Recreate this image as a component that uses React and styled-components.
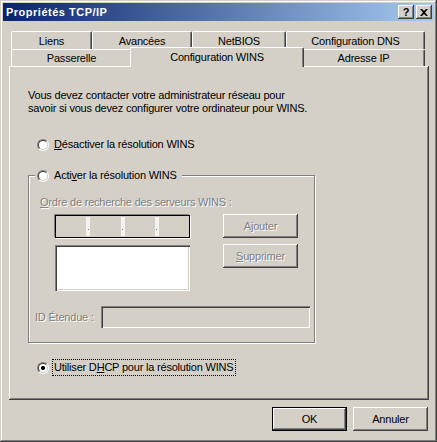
import React from 'react';
import styled, { createGlobalStyle, css } from 'styled-components';

const GlobalStyle = createGlobalStyle`
  html, body { margin: 0; padding: 0; background: #d4d0c8; }
  body {
    font-family: "Liberation Sans", Arial, sans-serif;
    font-size: 11px;
    letter-spacing: -0.2px;
    color: #000;
  }
`;

const raised = css`
  box-shadow: inset -1px -1px #404040, inset 1px 1px #fff, inset -2px -2px #808080, inset 2px 2px #d4d0c8;
`;

const sunken = css`
  box-shadow: inset 1px 1px #808080, inset 2px 2px #404040, inset -1px -1px #fff, inset -2px -2px #d4d0c8;
`;

const Window = styled.div`
  width: 437px;
  height: 442px;
  box-sizing: border-box;
  padding: 3px;
  background: #d4d0c8;
  box-shadow: inset -1px -1px #404040, inset 1px 1px #d4d0c8, inset -2px -2px #808080, inset 2px 2px #fff;
  display: flex;
  flex-direction: column;
`;

const TitleBar = styled.div`
  height: 18px;
  display: flex;
  align-items: center;
  padding: 0 2px 0 3px;
  background: linear-gradient(to right, #0a246a, #a6caf0);
  color: #fff;
  font-weight: bold;
  letter-spacing: 0.5px;
`;

const TitleText = styled.span`
  flex: 1;
`;

const CaptionButton = styled.div`
  width: 16px;
  height: 14px;
  margin-left: ${p => p.$gap || 0}px;
  box-sizing: border-box;
  background: #d4d0c8;
  ${raised};
  display: flex;
  align-items: center;
  justify-content: center;
  color: #000;
  font-size: 11px;
  font-weight: bold;
  letter-spacing: 0;
`;

const Body = styled.div`
  flex: 1;
  display: flex;
  flex-direction: column;
  padding: 10px 5px 0 6px;
`;

const TabStrip = styled.div`
  display: flex;
  flex-direction: column;
  padding-left: 2px;
`;

const TabRow = styled.div`
  display: flex;
  height: ${p => p.$h}px;
  align-items: flex-start;
`;

const Tab = styled.div`
  width: ${p => p.$w}px;
  height: ${p => p.$h}px;
  box-sizing: border-box;
  display: flex;
  align-items: center;
  justify-content: center;
  background: #d4d0c8;
  border-top: 1px solid #fff;
  border-left: 1px solid #fff;
  border-right: 1px solid #404040;
  border-radius: 2px 2px 0 0;
  box-shadow: inset -1px 0 #808080;
  ${p => p.$active && css`
    width: ${p.$w + 4}px;
    height: ${p.$h + 3}px;
    margin: -2px -2px 0;
    padding-bottom: 2px;
    position: relative;
    z-index: 1;
  `}
`;

const Panel = styled.div`
  width: 420px;
  height: 334px;
  box-sizing: border-box;
  padding: 23px 0 0 19px;
  ${raised};
  display: flex;
  flex-direction: column;
`;

const Intro = styled.p`
  margin: 0;
  line-height: 13px;
`;

const RadioRow = styled.div`
  display: flex;
  align-items: center;
  gap: 3px;
  height: 17px;
  margin: ${p => p.$m || 0};
`;

const RadioDot = styled.span`
  width: 12px;
  height: 12px;
  box-sizing: border-box;
  border-radius: 50%;
  border: 1px solid;
  border-color: #808080 #fff #fff #808080;
  display: flex;
  flex: none;

  &::before {
    content: "";
    width: 10px;
    height: 10px;
    box-sizing: border-box;
    border-radius: 50%;
    border: 1px solid;
    border-color: #404040 #d4d0c8 #d4d0c8 #404040;
    background: ${p => p.$checked
      ? 'radial-gradient(circle, #000 0 1.8px, #fff 2.3px)'
      : '#fff'};
  }
`;

const RadioLabel = styled.span`
  padding: 1px 2px 1px 1px;
  border: 1px dotted ${p => (p.$focus ? '#000' : 'transparent')};
  line-height: 13px;
`;

const GroupBox = styled.div`
  width: 287px;
  margin-top: 22px;
  padding-bottom: 14px;
  box-sizing: border-box;
  border: 1px solid #808080;
  box-shadow: inset 1px 1px #fff, 1px 1px #fff;
  display: flex;
  flex-direction: column;
`;

const Legend = styled(RadioRow)`
  width: fit-content;
  height: 13px;
  margin: -7px 0 0 6px;
  padding: 0 2px;
  background: #d4d0c8;
`;

const Disabled = styled.span`
  color: #808080;
  text-shadow: 1px 1px #fff;
`;

const FieldLabel = styled(Disabled)`
  display: block;
  margin: ${p => p.$m || 0};
  line-height: 13px;
`;

const ServerRow = styled.div`
  display: flex;
  align-items: flex-start;
  gap: 33px;
  margin: ${p => p.$m || 0};
`;

const IpField = styled.div`
  width: 135px;
  height: 23px;
  margin-top: 1px;
  box-sizing: border-box;
  background: #d4d0c8;
  border: 1px solid #000;
  box-shadow: -1px -1px #808080, 1px 1px #fff;
  display: flex;
  padding: 1px 0;
`;

const IpPart = styled.span`
  flex: 1;
`;

const IpDot = styled.span`
  width: 4px;
  background: #f4f3ef;
  display: flex;
  align-items: center;
  justify-content: center;

  &::after {
    content: "";
    width: 1px;
    height: 1px;
    margin-top: 5px;
    background: #808080;
    box-shadow: 1px 1px #fff;
  }
`;

const ListBox = styled.div`
  width: 135px;
  height: 46px;
  margin-top: 1px;
  box-sizing: border-box;
  background: #fff;
  ${sunken};
`;

const Button = styled.div`
  width: ${p => p.$w || 75}px;
  height: 24px;
  box-sizing: border-box;
  display: flex;
  align-items: center;
  justify-content: center;
  background: #d4d0c8;
  ${raised};
  ${p => p.$default && css`
    border: 1px solid #000;
    box-shadow: inset -1px -1px #404040, inset 1px 1px #fff, inset -2px -2px #808080;
  `}
`;

const ScopeRow = styled.div`
  display: flex;
  align-items: center;
  margin: 15px 0 0 6px;
`;

const ScopeField = styled.div`
  width: 209px;
  height: 22px;
  margin-left: 7px;
  box-sizing: border-box;
  background: #d4d0c8;
  ${sunken};
`;

const Footer = styled.div`
  display: flex;
  justify-content: flex-end;
  gap: 6px;
  padding: 7px 1px 0 0;
`;

const CloseGlyph = () => (
  <svg width="8" height="7" viewBox="0 0 8 7">
    <path d="M0 0h2l2 2 2-2h2L5 3.5 8 7H6L4 5 2 7H0l3-3.5z" fill="#000" />
  </svg>
);

const tabsBack = [
  { label: 'Liens', w: 81 },
  { label: 'Avancées', w: 100 },
  { label: 'NetBIOS', w: 94 },
  { label: 'Configuration DNS', w: 139 },
];

const tabsFront = [
  { label: 'Passerelle', w: 121 },
  { label: 'Configuration WINS', w: 170, active: true },
  { label: 'Adresse IP', w: 123 },
];

export default function App() {
  return (
    <>
      <GlobalStyle />
      <Window>
        <TitleBar>
          <TitleText>Propriétés TCP/IP</TitleText>
          <CaptionButton>?</CaptionButton>
          <CaptionButton $gap={2}><CloseGlyph /></CaptionButton>
        </TitleBar>

        <Body>
          <TabStrip>
            <TabRow $h={18}>
              {tabsBack.map(t => <Tab key={t.label} $w={t.w} $h={18}>{t.label}</Tab>)}
            </TabRow>
            <TabRow $h={17}>
              {tabsFront.map(t => (
                <Tab key={t.label} $w={t.w} $h={17} $active={t.active}>{t.label}</Tab>
              ))}
            </TabRow>
          </TabStrip>

          <Panel>
            <Intro>
              Vous devez contacter votre administrateur réseau pour<br />
              savoir si vous devez configurer votre ordinateur pour WINS.
            </Intro>

            <RadioRow $m="21px 0 0 9px">
              <RadioDot />
              <RadioLabel><u>D</u>ésactiver la résolution WINS</RadioLabel>
            </RadioRow>

            <GroupBox>
              <Legend>
                <RadioDot />
                <RadioLabel>Acti<u>v</u>er la résolution WINS</RadioLabel>
              </Legend>

              <FieldLabel $m="14px 0 0 11px"><u>O</u>rdre de recherche des serveurs WINS :</FieldLabel>

              <ServerRow $m="5px 0 0 26px">
                <IpField>
                  <IpPart /><IpDot /><IpPart /><IpDot /><IpPart /><IpDot /><IpPart />
                </IpField>
                <Button><Disabled>A<u>j</u>outer</Disabled></Button>
              </ServerRow>

              <ServerRow $m="6px 0 0 26px">
                <ListBox />
                <Button><Disabled><u>S</u>upprimer</Disabled></Button>
              </ServerRow>

              <ScopeRow>
                <Disabled>ID Étendue :</Disabled>
                <ScopeField />
              </ScopeRow>
            </GroupBox>

            <RadioRow $m="16px 0 0 9px">
              <RadioDot $checked />
              <RadioLabel $focus>Utiliser D<u>H</u>CP pour la résolution WINS</RadioLabel>
            </RadioRow>
          </Panel>

          <Footer>
            <Button $default>OK</Button>
            <Button>Annuler</Button>
          </Footer>
        </Body>
      </Window>
    </>
  );
}
